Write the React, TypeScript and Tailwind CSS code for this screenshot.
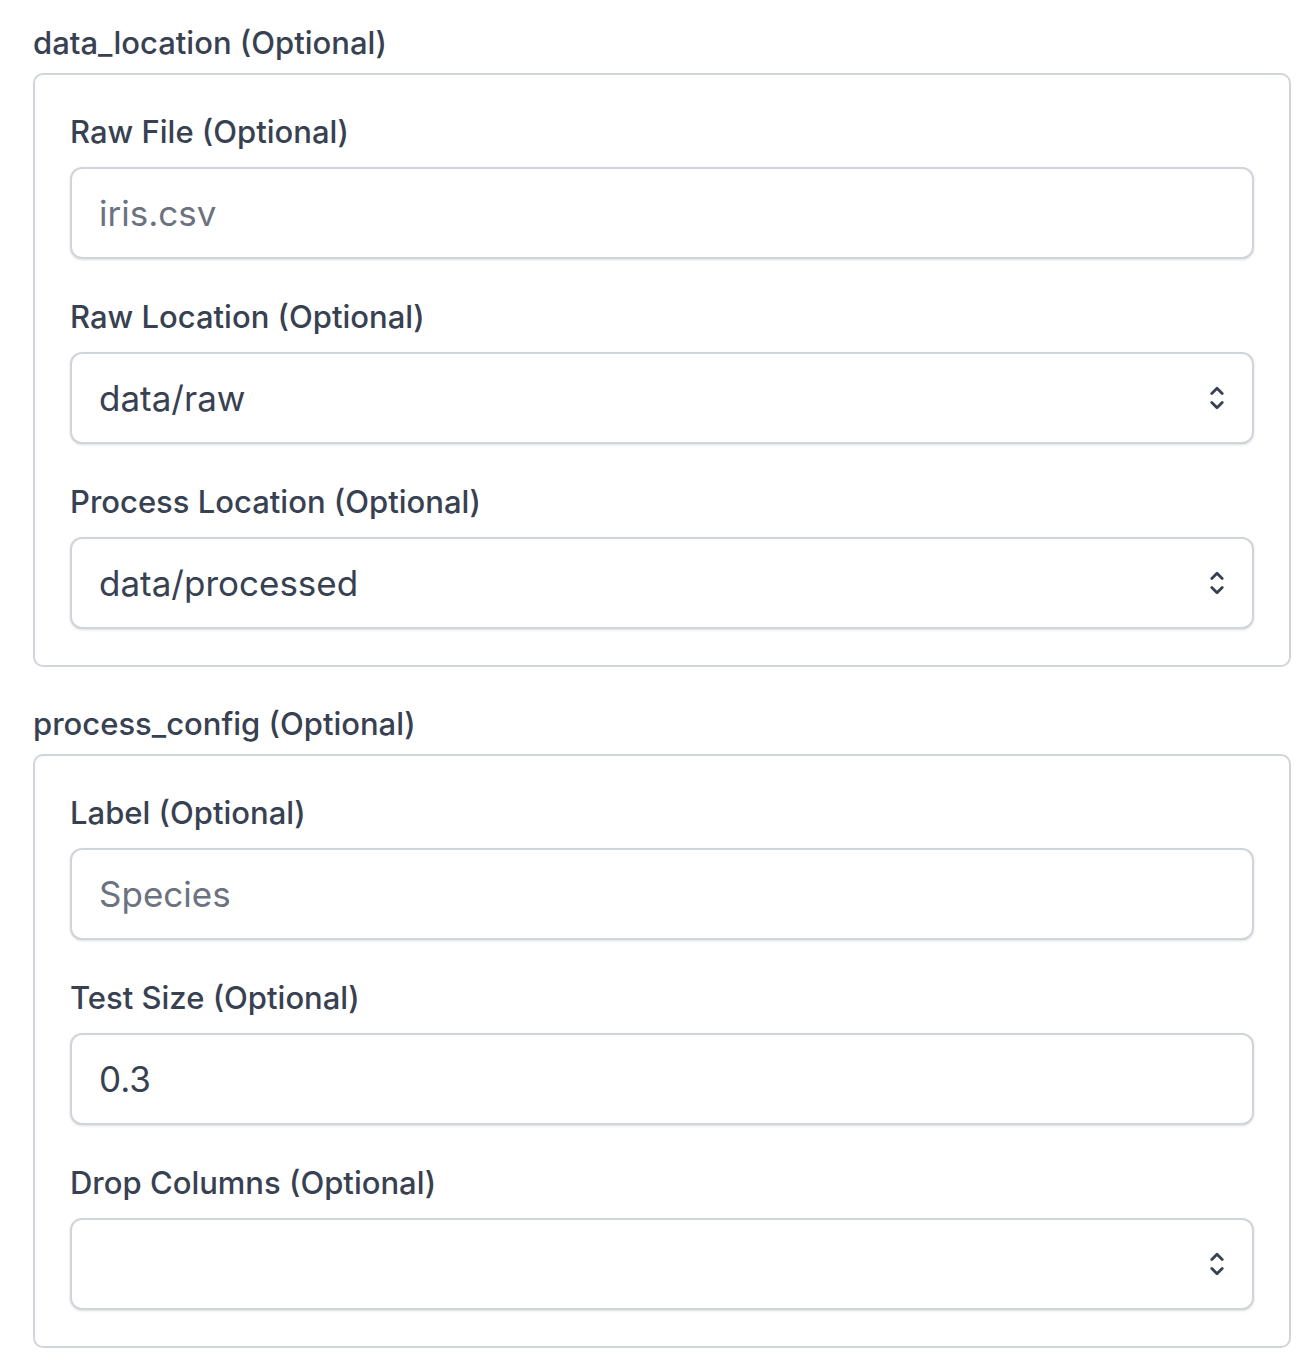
import React from "react";

type Field = {
  label: string;
  kind: "input" | "select";
  value?: string;
  placeholder?: string;
};

const SECTIONS: { title: string; fields: Field[] }[] = [
  {
    title: "data_location (Optional)",
    fields: [
      { label: "Raw File (Optional)", kind: "input", placeholder: "iris.csv" },
      { label: "Raw Location (Optional)", kind: "select", value: "data/raw" },
      { label: "Process Location (Optional)", kind: "select", value: "data/processed" },
    ],
  },
  {
    title: "process_config (Optional)",
    fields: [
      { label: "Label (Optional)", kind: "input", placeholder: "Species" },
      { label: "Test Size (Optional)", kind: "input", value: "0.3" },
      { label: "Drop Columns (Optional)", kind: "select", value: "" },
    ],
  },
];

const UpDownIcon = () => (
  <svg width="14" height="24" viewBox="0 0 14 24" fill="none" className="shrink-0">
    <path
      d="M1.8 7.5 L7 2.3 L12.2 7.5"
      stroke="#374151"
      strokeWidth="2.8"
      strokeLinecap="round"
      strokeLinejoin="round"
    />
    <path
      d="M1.8 16.5 L7 21.7 L12.2 16.5"
      stroke="#374151"
      strokeWidth="2.8"
      strokeLinecap="round"
      strokeLinejoin="round"
    />
  </svg>
);

const FieldRow = ({ field }: { field: Field }) => (
  <div className="flex flex-col">
    <label className="text-[31px] leading-[48px] font-medium text-[#374151] mb-[11px]">
      {field.label}
    </label>
    {field.kind === "input" ? (
      <input
        readOnly
        defaultValue={field.value}
        placeholder={field.placeholder}
        className="h-[92px] w-full rounded-[12px] border-2 border-[#d1d5db] bg-white px-[27px] text-[35px] text-[#374151] placeholder:text-[#6b7280] shadow-sm outline-none"
      />
    ) : (
      <button
        type="button"
        className="h-[92px] w-full rounded-[12px] border-2 border-[#d1d5db] bg-white pl-[27px] pr-[28px] flex items-center justify-between text-[35px] text-[#374151] shadow-sm text-left"
      >
        <span>{field.value}</span>
        <UpDownIcon />
      </button>
    )}
  </div>
);

export default function App() {
  return (
    <div className="min-h-screen bg-white pt-[19px] pl-[33px] pr-[21px] font-['Inter',sans-serif] flex flex-col gap-[33px]">
      {SECTIONS.map((section) => (
        <section key={section.title}>
          <h3 className="text-[31px] leading-[48px] font-medium text-[#374151] mb-[6px]">
            {section.title}
          </h3>
          <div className="rounded-[10px] border-2 border-[#d1d5db] px-[35px] pt-[33px] pb-[36px] flex flex-col gap-[34px]">
            {section.fields.map((field) => (
              <FieldRow key={field.label} field={field} />
            ))}
          </div>
        </section>
      ))}
    </div>
  );
}
